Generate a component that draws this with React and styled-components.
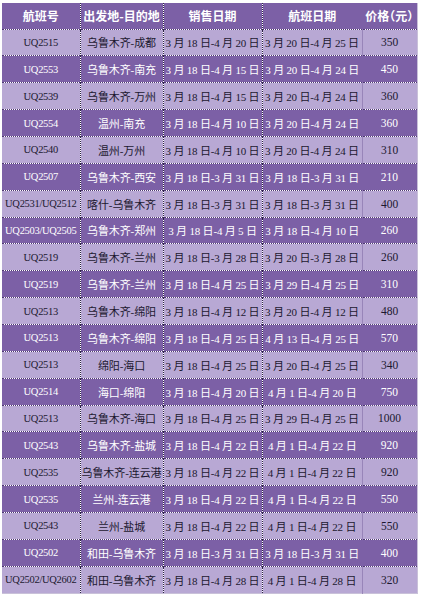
import React from "react";
import styled, { createGlobalStyle } from "styled-components";

const GlobalStyle = createGlobalStyle`
  html, body {
    margin: 0;
    padding: 0;
    background: #ffffff;
  }
`;

const Page = styled.div`
  padding: 3px 0 0 2px;
`;

const Table = styled.table`
  width: 415px;
  table-layout: fixed;
  border-collapse: collapse;
  font-family: "Liberation Serif", "Noto Sans CJK SC", serif;
  font-size: 11px;
  border-right: 1px solid #c9c1d9;
  border-bottom: 1px solid #c9c1d9;
`;

const Row = styled.tr`
  height: ${(p) => (p.$head ? "26px" : "26.86px")};
  background: ${(p) => (p.$dark ? "#7c60a6" : "#b8a8d4")};
  color: ${(p) => (p.$dark ? "#ffffff" : "#1c1830")};
  border-bottom: 1px dotted #4e3873;
`;

const sizes = {
  code: "font-size: 10.5px; letter-spacing: -0.3px;",
  route: "font-size: 11px; letter-spacing: -0.1px;",
  date: "font-size: 11px; letter-spacing: -0.2px;",
  price: "font-size: 11.5px;",
};

const Cell = styled.td`
  padding: 0;
  text-align: center;
  white-space: nowrap;
  overflow: hidden;
  ${(p) => sizes[p.$kind] || ""}
  border-right: ${(p) =>
    p.$last ? "none" : p.$soft ? "1px solid #9885b9" : "1px dotted #2b2145"};
`;

const HeadCell = styled(Cell).attrs({ as: "th" })`
  font-family: "Noto Sans CJK SC", sans-serif;
  font-weight: 700;
  font-size: 12px;
  letter-spacing: 0;
  font-feature-settings: "halt";
  color: #ffffff;
  border-right: ${(p) => (p.$last || p.$soft ? "none" : "1px dotted #2b2145")};
`;

const rows = [
  ["UQ2515", "乌鲁木齐-成都", "3 月 18 日-4 月 20 日", "3 月 20 日-4 月 25 日", "350"],
  ["UQ2553", "乌鲁木齐-南充", "3 月 18 日-4 月 15 日", "3 月 20 日-4 月 24 日", "450"],
  ["UQ2539", "乌鲁木齐-万州", "3 月 18 日-4 月 15 日", "3 月 20 日-4 月 24 日", "360"],
  ["UQ2554", "温州-南充", "3 月 18 日-4 月 10 日", "3 月 20 日-4 月 24 日", "360"],
  ["UQ2540", "温州-万州", "3 月 18 日-4 月 10 日", "3 月 20 日-4 月 24 日", "310"],
  ["UQ2507", "乌鲁木齐-西安", "3 月 18 日-3 月 31 日", "3 月 18 日-3 月 31 日", "210"],
  ["UQ2531/UQ2512", "喀什-乌鲁木齐", "3 月 18 日-3 月 31 日", "3 月 18 日-3 月 31 日", "400"],
  ["UQ2503/UQ2505", "乌鲁木齐-郑州", "3 月 18 日-4 月 5 日", "3 月 18 日-4 月 10 日", "260"],
  ["UQ2519", "乌鲁木齐-兰州", "3 月 18 日-3 月 28 日", "3 月 20 日-3 月 28 日", "260"],
  ["UQ2519", "乌鲁木齐-兰州", "3 月 18 日-4 月 25 日", "3 月 29 日-4 月 25 日", "310"],
  ["UQ2513", "乌鲁木齐-绵阳", "3 月 18 日-4 月 12 日", "3 月 20 日-4 月 12 日", "480"],
  ["UQ2513", "乌鲁木齐-绵阳", "3 月 18 日-4 月 25 日", "4 月 13 日-4 月 25 日", "570"],
  ["UQ2513", "绵阳-海口", "3 月 18 日-4 月 25 日", "3 月 20 日-4 月 25 日", "340"],
  ["UQ2514", "海口-绵阳", "3 月 18 日-4 月 20 日", "4 月 1 日-4 月 20 日", "750"],
  ["UQ2513", "乌鲁木齐-海口", "3 月 18 日-4 月 25 日", "3 月 29 日-4 月 25 日", "1000"],
  ["UQ2543", "乌鲁木齐-盐城", "3 月 18 日-4 月 22 日", "4 月 1 日-4 月 22 日", "920"],
  ["UQ2535", "乌鲁木齐-连云港", "3 月 18 日-4 月 22 日", "4 月 1 日-4 月 22 日", "920"],
  ["UQ2535", "兰州-连云港", "3 月 18 日-4 月 22 日", "4 月 1 日-4 月 22 日", "550"],
  ["UQ2543", "兰州-盐城", "3 月 18 日-4 月 22 日", "4 月 1 日-4 月 22 日", "550"],
  ["UQ2502", "和田-乌鲁木齐", "3 月 18 日-3 月 31 日", "3 月 18 日-3 月 31 日", "400"],
  ["UQ2502/UQ2602", "和田-乌鲁木齐", "3 月 18 日-4 月 28 日", "4 月 1 日-4 月 28 日", "320"],
];

const headers = ["航班号", "出发地-目的地", "销售日期", "航班日期", "价格（元）"];
const widths = [78, 83, 99, 100, 55];
const kinds = ["code", "route", "date", "date", "price"];

export default function App() {
  return (
    <>
      <GlobalStyle />
      <Page>
        <Table>
          <colgroup>
            {widths.map((w, i) => (
              <col key={i} style={{ width: w }} />
            ))}
          </colgroup>
          <thead>
            <Row $head $dark>
              {headers.map((h, i) => (
                <HeadCell key={h} $soft={i === 3} $last={i === 4}>
                  {h}
                </HeadCell>
              ))}
            </Row>
          </thead>
          <tbody>
            {rows.map((r, idx) => {
              const dark = idx % 2 === 1;
              return (
                <Row key={idx} $dark={dark}>
                  {r.map((c, i) => (
                    <Cell
                      key={i}
                      $kind={kinds[i]}
                      $soft={i === 3 && !dark}
                      $last={i === 4 || (i === 3 && dark)}
                    >
                      {c}
                    </Cell>
                  ))}
                </Row>
              );
            })}
          </tbody>
        </Table>
      </Page>
    </>
  );
}
